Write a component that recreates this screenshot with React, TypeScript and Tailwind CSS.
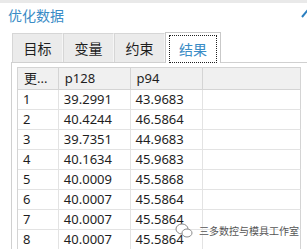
import React from "react";

const rows = [
  ["1", "39.2991", "43.9683"],
  ["2", "40.4244", "46.5864"],
  ["3", "39.7351", "44.9683"],
  ["4", "40.1634", "45.9683"],
  ["5", "40.0009", "45.5868"],
  ["6", "40.0007", "45.5864"],
  ["7", "40.0007", "45.5864"],
  ["8", "40.0007", "45.5864"],
];

export default function App() {
  const font = { fontFamily: '"Noto Sans", "Noto Sans CJK SC", sans-serif' };
  return (
    <div
      className="relative w-[307px] h-[249px] overflow-hidden bg-white text-[#1e1e1e]"
      style={font}
    >
      <div className="h-[3px] bg-[#e9e9e9]" />
      <div className="flex h-[25px] items-center justify-between pl-[8px]">
        <span className="text-[14px] leading-none text-[#3a8cc6]">优化数据</span>
        <svg width="12" height="10" viewBox="0 0 12 10" className="-mr-[6px] mb-[4px]">
          <polyline points="1,8 6,2 11,8" fill="none" stroke="#2a7fc0" strokeWidth="2" />
        </svg>
      </div>
      <div className="flex h-[34px] items-end pl-[12px]">
        {["目标", "变量", "约束"].map((t) => (
          <div
            key={t}
            className="flex h-[29px] w-[51px] items-center justify-center border-t border-l border-[#d6d6d6] bg-[#ebebeb] text-[14px] border-r border-r-[#f6f6f6]"
          >
            {t}
          </div>
        ))}
        <div className="relative z-10 -mb-px flex h-[31px] w-[56px] items-start border-x border-t border-[#c9c9c9] bg-white pt-[2px] px-[3px]">
          <div className="flex h-[28px] w-full items-center justify-center border border-dotted border-[#222] text-[14px] text-[#3a8cc6]">
            结果
          </div>
        </div>
      </div>
      <div className="ml-[11px] h-[200px] border-l border-t border-[#d0d0d0] pl-[5px] pt-[4px]">
        <div className="w-[284px] border-l border-t border-[#d4d4d4] text-[13px]">
          <div className="flex h-[22px] bg-[#f0f0f0]">
            {["更...", "p128", "p94", ""].map((h, i) => (
              <div
                key={i}
                className={`flex items-center border-r border-b border-[#d4d4d4] pl-[6px] ${
                  i === 0 ? "w-[41px]" : i === 1 ? "w-[72px]" : i === 2 ? "w-[73px]" : "w-[98px]"
                }`}
              >
                {h}
              </div>
            ))}
          </div>
          {rows.map((r, ri) => (
            <div key={ri} className="flex h-[20px]">
              {[...r, ""].map((c, i) => (
                <div
                  key={i}
                  className={`flex items-center border-r border-b border-[#e3e3e3] pl-[5px] ${
                    i === 0 ? "w-[41px]" : i === 1 ? "w-[72px]" : i === 2 ? "w-[73px]" : "w-[98px] border-r-[#d4d4d4]"
                  }`}
                >
                  {c}
                </div>
              ))}
            </div>
          ))}
        </div>
      </div>
      <div className="absolute left-[175px] top-[223px] flex items-center gap-[6px]">
        <svg width="18" height="16" viewBox="0 0 18 16">
          <ellipse cx="7" cy="6" rx="6" ry="5" fill="white" stroke="#8a8a8a" strokeWidth="1" />
          <ellipse cx="12" cy="10" rx="5" ry="4" fill="white" stroke="#8a8a8a" strokeWidth="1" />
        </svg>
        <span
          className="text-[10px] leading-none text-[#555]"
          style={{ fontFamily: '"Noto Sans CJK SC", sans-serif', textShadow: "0 0 2px #fff, 0 0 2px #fff" }}
        >
          三多数控与模具工作室
        </span>
      </div>
    </div>
  );
}
